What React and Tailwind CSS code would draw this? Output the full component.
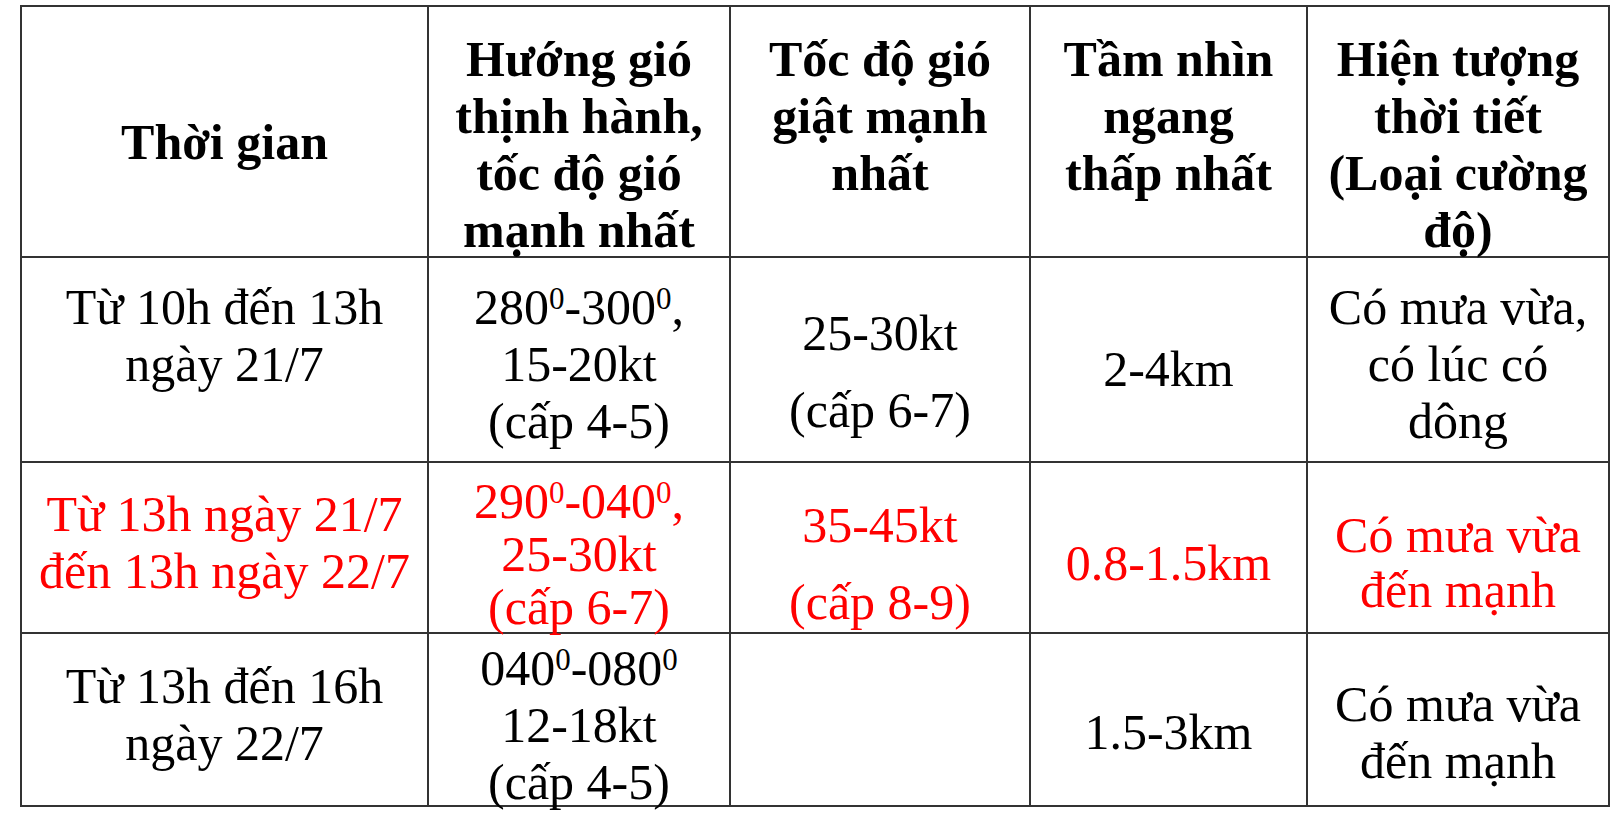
function C({ pt, lh = "leading-[57px]", children }) {
  return (
    <td className={"border-2 border-[#333] text-center p-0 align-top " + pt}>
      <div className={"h-0 overflow-visible " + lh}>{children}</div>
    </td>
  );
}

function Sup({ children }) {
  return <sup className="text-[31px]">{children}</sup>;
}

export default function App() {
  return (
    <div className="w-[1618px] h-[820px] bg-white pt-[5px] pl-[20px]" style={{ fontFamily: '"Liberation Serif", "Times New Roman", serif' }}>
      <table className="table-fixed border-collapse text-[50px] text-black w-[1588px]">
        <colgroup>
          <col className="w-[407px]" />
          <col className="w-[302px]" />
          <col className="w-[300px]" />
          <col className="w-[277px]" />
          <col className="w-[302px]" />
        </colgroup>
        <tbody>
          <tr className="h-[251px] font-bold">
            <C pt="pt-[107px]">Thời gian</C>
            <C pt="pt-[24px]">Hướng gió<br />thịnh hành,<br />tốc độ gió<br />mạnh nhất</C>
            <C pt="pt-[24px]">Tốc độ gió<br />giật mạnh<br />nhất</C>
            <C pt="pt-[24px]">Tầm nhìn<br />ngang<br />thấp nhất</C>
            <C pt="pt-[24px]">Hiện tượng<br />thời tiết<br />(Loại cường<br />độ)</C>
          </tr>
          <tr className="h-[205px]">
            <C pt="pt-[21px]">Từ 10h đến 13h<br />ngày 21/7</C>
            <C pt="pt-[21px]">280<Sup>0</Sup>-300<Sup>0</Sup>,<br />15-20kt<br />(cấp 4-5)</C>
            <C pt="pt-[47px]"><div className="mb-[20px]">25-30kt</div><div>(cấp 6-7)</div></C>
            <C pt="pt-[83px]">2-4km</C>
            <C pt="pt-[21px]">Có mưa vừa,<br />có lúc có<br />dông</C>
          </tr>
          <tr className="h-[171px] text-[#f00]">
            <C pt="pt-[23px]">Từ 13h ngày 21/7<br />đến 13h ngày 22/7</C>
            <C pt="pt-[12px]" lh="leading-[53px]">290<Sup>0</Sup>-040<Sup>0</Sup>,<br />25-30kt<br />(cấp 6-7)</C>
            <C pt="pt-[34px]"><div className="mb-[20px]">35-45kt</div><div>(cấp 8-9)</div></C>
            <C pt="pt-[72px]">0.8-1.5km</C>
            <C pt="pt-[45px]" lh="leading-[55px]">Có mưa vừa<br />đến mạnh</C>
          </tr>
          <tr className="h-[173px]">
            <C pt="pt-[24px]">Từ 13h đến 16h<br />ngày 22/7</C>
            <C pt="pt-[6px]">040<Sup>0</Sup>-080<Sup>0</Sup><br />12-18kt<br />(cấp 4-5)</C>
            <C pt="pt-0"></C>
            <C pt="pt-[70px]">1.5-3km</C>
            <C pt="pt-[42px]">Có mưa vừa<br />đến mạnh</C>
          </tr>
        </tbody>
      </table>
    </div>
  );
}
